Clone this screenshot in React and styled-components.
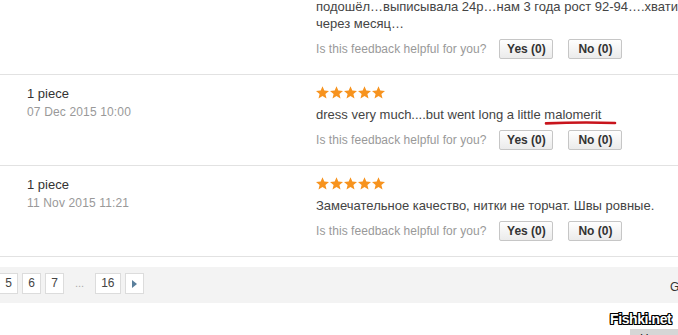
import React from "react";
import styled, { createGlobalStyle } from "styled-components";

const Global = createGlobalStyle`
  html, body { margin: 0; padding: 0; background: #fff; overflow: hidden; }
  body { font-family: "Liberation Sans", Arial, sans-serif; width: 678px; height: 335px; }
`;

const Page = styled.div`
  position: relative;
  width: 678px;
  height: 335px;
  overflow: hidden;
`;

const List = styled.div`
  margin-top: -50px;
`;

const Row = styled.div`
  display: grid;
  grid-template-columns: 316px 1fr;
  border-bottom: 1px solid #e2e2e2;
`;

const Meta = styled.div`
  padding: 10px 0 0 27px;
`;

const Qty = styled.div`
  font-size: 13px;
  line-height: 18px;
  color: #333;
`;

const DateText = styled.div`
  font-size: 12px;
  line-height: 18px;
  color: #999;
  letter-spacing: 0.15px;
`;

const Body = styled.div`
  padding: 12px 0 15px 0;
`;

const Stars = styled.div`
  display: flex;
  gap: 1px;
  height: 12px;
  margin-bottom: 7px;
  svg { display: block; margin-top: -1px; }
`;

const Text = styled.div`
  font-size: 13px;
  line-height: 17px;
  color: #444;
  margin-bottom: 7px;
  white-space: pre;
`;

const Marked = styled.span`
  position: relative;
  svg {
    position: absolute;
    left: 1px;
    top: 14px;
    overflow: visible;
  }
`;

const Helpful = styled.div`
  display: flex;
  align-items: center;
  height: 20px;
`;

const Question = styled.span`
  font-size: 12px;
  color: #999;
  margin-right: 13px;
  letter-spacing: 0.05px;
`;

const VoteButton = styled.button`
  box-sizing: border-box;
  min-width: 54px;
  height: 20px;
  padding: 0 6px;
  margin-right: ${(p) => p.$gap || 0}px;
  border: 1px solid #c6c6c6;
  border-radius: 2px;
  background: linear-gradient(#fefefe, #ebebeb);
  font-family: "Liberation Sans", Arial, sans-serif;
  font-weight: bold;
  font-size: 12px;
  color: #333;
  line-height: 18px;
`;

const Pager = styled.div`
  margin-top: 10px;
  height: 36px;
  box-sizing: border-box;
  padding: 6px 0 0 0;
  background: #f3f3f3;
  display: flex;
  align-items: flex-start;
  justify-content: space-between;
`;

const Pages = styled.div`
  display: flex;
  align-items: center;
  gap: 4px;
  margin-left: -1px;
`;

const PageBtn = styled.span`
  box-sizing: border-box;
  height: 21px;
  min-width: 19px;
  padding: 0 5px;
  border: 1px solid #dcdcdc;
  background: #fff;
  font-size: 12px;
  line-height: 19px;
  color: #444;
  display: flex;
  align-items: center;
  justify-content: center;
`;

const Dots = styled.span`
  font-size: 11px;
  color: #aaa;
  padding: 0 7px 0 7px;
  line-height: 19px;
`;

const GoTo = styled.span`
  font-size: 12px;
  color: #333;
  white-space: nowrap;
  margin-right: -63px;
  line-height: 28px;
  width: 71px;
`;

const Watermark = styled.div`
  position: absolute;
  left: 610px;
  top: 311px;
  font-family: "Liberation Sans", Arial, sans-serif;
  font-weight: bold;
  font-size: 14px;
  letter-spacing: -0.4px;
  color: #fff;
  text-shadow: 1px 0 0 #000, -1px 0 0 #000, 0 1px 0 #000, 0 -1px 0 #000,
    1px 1px 0 #000, -1px -1px 0 #000, 1px -1px 0 #000, -1px 1px 0 #000;
`;

const NewTag = styled.div`
  position: absolute;
  left: 630px;
  top: 329px;
  width: 60px;
  height: 12px;
  box-sizing: border-box;
  padding: 4px 0 0 10px;
  background: #d6d6d6;
  font-size: 12px;
  line-height: 12px;
  color: #222;
  overflow: hidden;
`;

const Star = () => (
  <svg width="13" height="13" viewBox="0 0 13 13">
    <polygon
      points="6.5,0.2 8.3,4.5 13,4.9 9.4,8 10.5,12.6 6.5,10.1 2.5,12.6 3.6,8 0,4.9 4.7,4.5"
      fill="#f7931e"
    />
  </svg>
);

const Rating = () => (
  <Stars>
    {[0, 1, 2, 3, 4].map((i) => (
      <Star key={i} />
    ))}
  </Stars>
);

const Review = ({ date, children }) => (
  <Row>
    <Meta>
      <Qty>1 piece</Qty>
      <DateText>{date}</DateText>
    </Meta>
    <Body>
      <Rating />
      <Text>{children}</Text>
      <Helpful>
        <Question>Is this feedback helpful for you?</Question>
        <VoteButton $gap={15}>Yes (0)</VoteButton>
        <VoteButton>No (0)</VoteButton>
      </Helpful>
    </Body>
  </Row>
);

export default function App() {
  return (
    <Page>
      <Global />
      <List>
        <Review date="15 Dec 2015 09:12">
          {"Платье пришло быстро, качество хорошее, размер\nподошёл…выписывала 24р…нам 3 года рост 92-94….хватит\nчерез месяц…"}
        </Review>
        <Review date="07 Dec 2015 10:00">
          dress very much....but went long a little{" "}
          <Marked>
            malomerit
            <svg width="72" height="4" viewBox="0 0 72 4">
              <path d="M1 2.4 C 20 1.6, 45 1.2, 70 2" stroke="#c8141c" strokeWidth="2.6" strokeLinecap="round" fill="none" />
            </svg>
          </Marked>
        </Review>
        <Review date="11 Nov 2015 11:21">
          Замечательное качество, нитки не торчат. Швы ровные.
        </Review>
      </List>
      <Pager>
        <Pages>
          <PageBtn>5</PageBtn>
          <PageBtn>6</PageBtn>
          <PageBtn>7</PageBtn>
          <Dots>...</Dots>
          <PageBtn>16</PageBtn>
          <PageBtn>
            <svg width="5" height="8" viewBox="0 0 5 8">
              <polygon points="0,0 5,4 0,8" fill="#5a7f9c" />
            </svg>
          </PageBtn>
        </Pages>
        <GoTo>Go to Page</GoTo>
      </Pager>
      <Watermark>Fishki.net</Watermark>
      <NewTag>Новое</NewTag>
    </Page>
  );
}
